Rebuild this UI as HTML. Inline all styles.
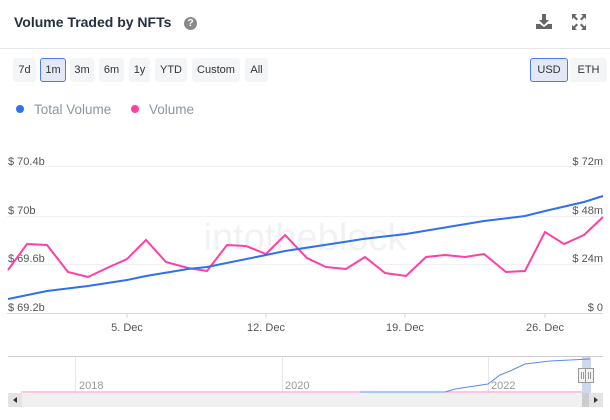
<!DOCTYPE html>
<html><head><meta charset="utf-8"><style>
body{margin:0;width:610px;height:420px;background:#fff;font-family:"Liberation Sans",sans-serif;overflow:hidden;position:relative}
.t{position:absolute;left:14px;top:14px;font-size:14px;font-weight:bold;color:#252f3d}
.q{position:absolute;left:184px;top:17px;width:13px;height:13px;border-radius:50%;background:#8a8a8a;color:#fff;font-size:10px;font-weight:bold;text-align:center;line-height:13px}
.sep{position:absolute;left:0;right:0;top:48px;height:1px;background:#e6e8eb}
.b{position:absolute;top:58px;height:24px;line-height:24px;background:#f4f5f6;border-radius:3px;font-size:11px;color:#333;text-align:center;box-sizing:border-box}
.sel{background:#e3e8f7;border:1px solid #4a7cf0;line-height:22px}
.lg{position:absolute;top:102px;font-size:13.5px;color:#8c95a1}
.dot{position:absolute;top:105px;width:8px;height:8px;border-radius:50%}
</style></head><body>
<div class="t">Volume Traded by NFTs</div><div class="q">?</div>
<svg style="position:absolute;left:535px;top:13px" width="18" height="18" viewBox="0 0 18 18"><path d="M7 1h4v6h3l-5 5-5-5h3z" fill="#666"/><path d="M1 11h4l4 3 4-3h4v5H1z" fill="#666"/></svg>
<svg style="position:absolute;left:572px;top:14px" width="14" height="16" viewBox="0 0 14 16"><g fill="#666"><path d="M0 0h5l-2 2 3 3-1.5 1.5-3-3-1.5 2z"/><path d="M14 0h-5l2 2-3 3 1.5 1.5 3-3 1.5 2z"/><path d="M0 16h5l-2-2 3-3-1.5-1.5-3 3-1.5-2z"/><path d="M14 16h-5l2-2-3-3 1.5-1.5 3 3 1.5-2z"/></g></svg>
<div class="sep"></div>
<div class="b" style="left:13px;width:23px">7d</div>
<div class="b sel" style="left:40px;width:26px">1m</div>
<div class="b" style="left:70px;width:24px">3m</div>
<div class="b" style="left:99px;width:25px">6m</div>
<div class="b" style="left:129px;width:21px">1y</div>
<div class="b" style="left:155px;width:32px">YTD</div>
<div class="b" style="left:192px;width:48px">Custom</div>
<div class="b" style="left:245px;width:23px">All</div>
<div class="b sel" style="left:530px;width:38px">USD</div>
<div class="b" style="left:570px;width:37px">ETH</div>
<div class="dot" style="left:16px;background:#2f6ff0"></div><div class="lg" style="left:34px">Total Volume</div>
<div class="dot" style="left:131px;background:#ff3fa4"></div><div class="lg" style="left:149px">Volume</div>
<svg style="position:absolute;left:0;top:0" width="610" height="420">
<g stroke="#eef0f3" stroke-width="1"><line x1="7" y1="166.5" x2="603" y2="166.5"/><line x1="7" y1="216.5" x2="603" y2="216.5"/><line x1="7" y1="264.5" x2="603" y2="264.5"/></g>
<line x1="7" y1="313.5" x2="603" y2="313.5" stroke="#d0d7e6"/>
<g stroke="#d0d7e6"><line x1="127" y1="313" x2="127" y2="318"/><line x1="266" y1="313" x2="266" y2="318"/><line x1="405" y1="313" x2="405" y2="318"/><line x1="545" y1="313" x2="545" y2="318"/></g>
<text x="305" y="250" font-size="38" fill="#f1f2f4" text-anchor="middle" font-family="Liberation Sans">intotheblock</text>
<g font-size="11" fill="#555"><text x="8" y="165">$ 70.4b</text><text x="8" y="214">$ 70b</text><text x="8" y="262">$ 69.6b</text><text x="8" y="311">$ 69.2b</text>
<g text-anchor="end"><text x="603" y="165">$ 72m</text><text x="603" y="214">$ 48m</text><text x="603" y="262">$ 24m</text><text x="603" y="311">$ 0</text></g>
<g text-anchor="middle"><text x="127" y="331">5. Dec</text><text x="266" y="331">12. Dec</text><text x="405" y="331">19. Dec</text><text x="545" y="331">26. Dec</text></g></g>
<polyline fill="none" stroke="#ff3fa4" stroke-width="2" points="8,270 27,244 47,245 68,272 88,277 107,268 127,259 146,240 166,262 188,268 207,271 227,245 246,246 266,254 285,235 307,258 326,267 346,269 365,257 385,273 406,276 426,257 445,255 465,257 484,254 506,272 525,271 545,232 564,244 584,235 603,217"/>
<polyline fill="none" stroke="#2f6ff0" stroke-width="2" points="8,299 47,291 88,286 127,280 146,276 188,269 207,267 266,255 285,251 344,242 363,239 406,234 484,221 525,216 545,211 584,202 603,196"/>
<line x1="8" y1="356.5" x2="603" y2="356.5" stroke="#ccc"/>
<g stroke="#e6e6e6"><line x1="75.5" y1="357" x2="75.5" y2="393"/><line x1="282.5" y1="357" x2="282.5" y2="393"/><line x1="488.5" y1="357" x2="488.5" y2="393"/></g>
<g font-size="11" fill="#999"><text x="79" y="389">2018</text><text x="285" y="389">2020</text><text x="491" y="389">2022</text></g>
<rect x="582" y="357" width="9" height="36" fill="#cdd7ee"/>
<polyline fill="none" stroke="#ff8cc8" stroke-width="1" points="21,392 582,392"/>
<polyline fill="none" stroke="#5b8cf0" stroke-width="1" points="360,392 445,392 455,389 488,384 500,375 510,371 525,364 550,361 590,359"/>
<rect x="8" y="393" width="595" height="14" fill="#f0f0f0"/>
<rect x="8" y="393" width="14" height="14" fill="#e4e4e4"/><path d="M17 397v6l-4-3z" fill="#333"/>
<rect x="582" y="393" width="9" height="14" fill="#ccc"/>
<rect x="589" y="393" width="14" height="14" fill="#e4e4e4"/><path d="M594 397v6l4-3z" fill="#333"/>
<rect x="578.5" y="368.5" width="8" height="14" fill="#f2f2f2" stroke="#999"/><rect x="585.5" y="368.5" width="8" height="14" fill="#f2f2f2" stroke="#999"/>
<g stroke="#999"><line x1="581.5" y1="372" x2="581.5" y2="379"/><line x1="583.5" y1="372" x2="583.5" y2="379"/><line x1="588.5" y1="372" x2="588.5" y2="379"/><line x1="590.5" y1="372" x2="590.5" y2="379"/></g>
</svg>
</body></html>
